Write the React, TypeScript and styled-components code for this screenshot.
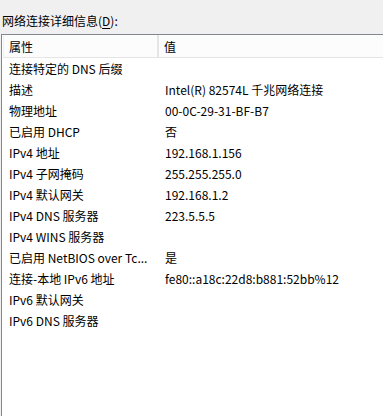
import styled, { createGlobalStyle } from "styled-components";

const GlobalStyle = createGlobalStyle`
  html, body {
    margin: 0;
    padding: 0;
    background: #f0f0f0;
    overflow: hidden;
  }
  body {
    font-family: "Noto Sans CJK SC", "Noto Sans", sans-serif;
    font-size: 12px;
    color: #000;
  }
`;

const Page = styled.div`
  display: flex;
  flex-direction: column;
  height: 100vh;
`;

const Caption = styled.div`
  height: 34px;
  display: flex;
  align-items: flex-end;
  padding: 0 0 5px 2px;
  box-sizing: border-box;
  line-height: 16px;
`;

const Key = styled.span`
  text-decoration: underline;
  text-underline-offset: 2px;
`;

const ListBox = styled.div`
  flex: 1;
  margin-left: 1px;
  background: #fff;
  border-top: 1px solid #828790;
  border-left: 1px solid #828790;
`;

const Header = styled.div`
  display: grid;
  grid-template-columns: 155px 1fr;
  height: 22px;
  margin-left: 1px;
  background: #fcfcfc;
  border-bottom: 1px solid #e5e5e5;
  border-left: 1px solid #f0f0f0;
`;

const HeaderCell = styled.div<{ $divider?: boolean }>`
  display: flex;
  align-items: center;
  padding-left: ${(p) => (p.$divider ? "5px" : "5px")};
  border-right: ${(p) => (p.$divider ? "2px solid #e5e5e5" : "none")};
`;

const Row = styled.div`
  display: grid;
  grid-template-columns: 156px 1fr;
  height: 21px;
  align-items: center;
`;

const Cell = styled.div`
  padding-left: 7px;
  white-space: nowrap;
  overflow: hidden;
  line-height: 16px;
`;

const rows: [string, string][] = [
  ["连接特定的 DNS 后缀", ""],
  ["描述", "Intel(R) 82574L 千兆网络连接"],
  ["物理地址", "00-0C-29-31-BF-B7"],
  ["已启用 DHCP", "否"],
  ["IPv4 地址", "192.168.1.156"],
  ["IPv4 子网掩码", "255.255.255.0"],
  ["IPv4 默认网关", "192.168.1.2"],
  ["IPv4 DNS 服务器", "223.5.5.5"],
  ["IPv4 WINS 服务器", ""],
  ["已启用 NetBIOS over Tc...", "是"],
  ["连接-本地 IPv6 地址", "fe80::a18c:22d8:b881:52bb%12"],
  ["IPv6 默认网关", ""],
  ["IPv6 DNS 服务器", ""],
];

const App = () => {
  return (
    <Page>
      <GlobalStyle />
      <Caption>
        <span>
          网络连接详细信息(<Key>D</Key>):
        </span>
      </Caption>
      <ListBox>
        <Header>
          <HeaderCell $divider>属性</HeaderCell>
          <HeaderCell>值</HeaderCell>
        </Header>
        {rows.map(([k, v]) => (
          <Row key={k}>
            <Cell>{k}</Cell>
            <Cell>{v}</Cell>
          </Row>
        ))}
      </ListBox>
    </Page>
  );
};

export default App;
